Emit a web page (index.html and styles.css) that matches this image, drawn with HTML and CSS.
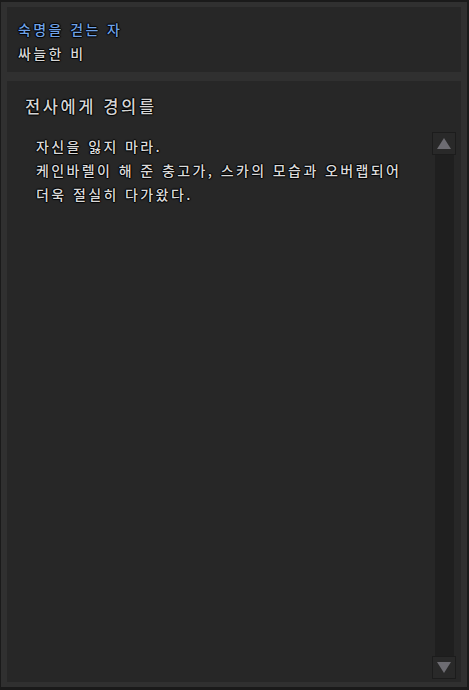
FILE: index.html
```html
<!DOCTYPE html>
<html lang="ko">
<head>
<meta charset="utf-8">
<link rel="stylesheet" href="styles.css">
</head>
<body>
<div class="frame">
  <section class="head-panel">
    <div class="quest">숙명을 걷는 자</div>
    <div class="sub">싸늘한 비</div>
  </section>
  <section class="main-panel">
    <h1 class="title">전사에게 경의를</h1>
    <div class="body-row">
      <div class="text">
        <p>자신을 잃지 마라.</p>
        <p>케인바렐이 해 준 충고가, 스카의 모습과 오버랩되어</p>
        <p>더욱 절실히 다가왔다.</p>
      </div>
      <div class="scrollbar">
        <div class="btn"><svg width="14" height="11" viewBox="0 0 14 11"><polygon points="7,0 14,11 0,11" fill="#6d6c72"/></svg></div>
        <div class="track"></div>
        <div class="btn"><svg width="14" height="11" viewBox="0 0 14 11"><polygon points="0,0 14,0 7,11" fill="#6d6c72"/></svg></div>
      </div>
    </div>
  </section>
</div>
</body>
</html>
```
FILE: styles.css
```css
html, body {
  margin: 0;
  padding: 0;
  background: #1a1a1a;
  width: 469px;
  height: 690px;
  overflow: hidden;
}
body {
  font-family: "Noto Sans CJK KR", "Noto Sans", sans-serif;
  padding: 2px 2px 3px 1px;
  box-sizing: border-box;
}
.frame {
  background: #303030;
  width: 466px;
  height: 685px;
  box-sizing: border-box;
  padding: 5px 6px 5px 6px;
  display: flex;
  flex-direction: column;
  gap: 9px;
}
.head-panel {
  background: #272727;
  height: 65px;
  box-sizing: border-box;
  padding: 10px 10px 0 11px;
  font-size: 14px;
  line-height: 24px;
  letter-spacing: 2.4px;
  font-weight: 500;
  text-shadow: 1px 0 1px #000, -1px 0 1px #000, 0 1px 1px #000, 0 -1px 1px #000;
}
.quest { color: #6fa2e6; }
.sub { color: #d6d6d6; }
.main-panel {
  background: #272727;
  flex: 1;
  box-sizing: border-box;
  padding: 13px 5px 3px 18px;
  display: flex;
  flex-direction: column;
  gap: 14px;
}
.title {
  margin: 0;
  font-size: 16.5px;
  font-weight: 500;
  line-height: 24px;
  letter-spacing: 2.6px;
  color: #d4d4d4;
  text-shadow: 1px 0 1px #000, -1px 0 1px #000, 0 1px 1px #000, 0 -1px 1px #000;
}
.body-row {
  flex: 1;
  display: flex;
}
.text {
  flex: 1;
  padding: 2px 0 0 11px;
  font-size: 14px;
  line-height: 24px;
  letter-spacing: 2.4px;
  font-weight: 500;
  color: #dadada;
  text-shadow: 1px 0 1px #000, -1px 0 1px #000, 0 1px 1px #000, 0 -1px 1px #000;
}
.text p { margin: 0; }
.scrollbar {
  width: 24px;
  display: flex;
  flex-direction: column;
  align-items: center;
}
.btn {
  width: 24px;
  height: 23px;
  box-sizing: border-box;
  border: 1px solid #1c1c1c;
  background: #292929;
  display: flex;
  align-items: center;
  justify-content: center;
}
.track {
  flex: 1;
  width: 19px;
  background: #1f1f1f;
}
```
